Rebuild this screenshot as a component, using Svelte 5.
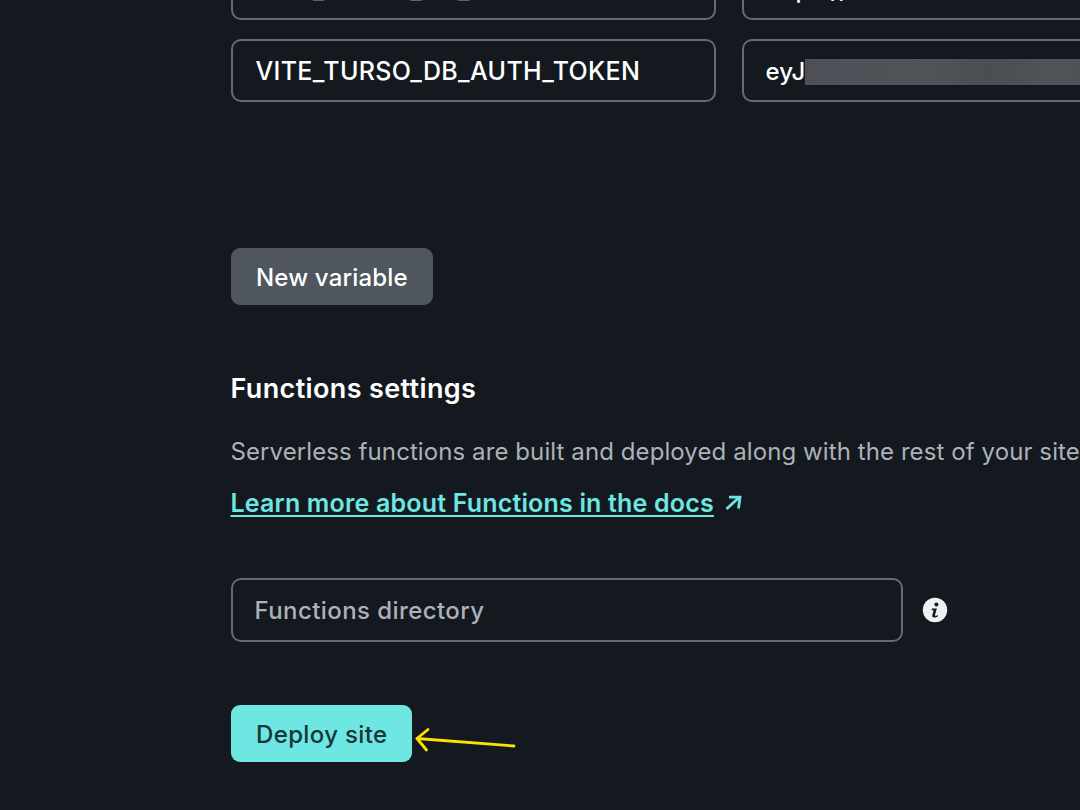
<script>
  const rows = [
    { name: 'VITE_TURSO_DB_URL', prefix: 'https://' },
    { name: 'VITE_TURSO_DB_AUTH_TOKEN', prefix: 'eyJ' }
  ];
</script>

<main class="page">
  <div class="vars">
    {#each rows as row}
      <div class="field name">{row.name}</div>
      <div class="field value">
        <span>{row.prefix}</span>
        <span class="blur"></span>
      </div>
    {/each}
  </div>

  <button class="btn secondary">New variable</button>

  <h2>Functions settings</h2>
  <p class="desc">Serverless functions are built and deployed along with the rest of your site.</p>
  <p class="learn">
    <a href="#docs">Learn more about Functions in the docs</a>
    <svg class="ext" width="17" height="15" viewBox="0 0 17 15" fill="none" stroke="#6ee6e1" stroke-width="2.8">
      <path d="M1.5 14 L13.5 3" />
      <path d="M4 2.2 H15 L13.5 13.5" />
    </svg>
  </p>

  <div class="dir-row">
    <div class="field dir">Functions directory</div>
    <svg class="info" width="26" height="26" viewBox="0 0 26 26">
      <circle cx="13" cy="13" r="12.2" fill="#eef0f2" />
      <circle cx="14.4" cy="7.6" r="2" fill="#151a21" />
      <path d="M9.8 11.6 H14.9 L12.9 18.2 C12.7 19 13.4 19.2 15.6 18 L15.7 19.4 C13.7 20.8 9.8 21.4 10.2 18.6 L11.6 13.2 H9.8 Z" fill="#151a21" />
    </svg>
  </div>

  <div class="deploy">
    <button class="btn primary">Deploy site</button>
    <svg class="callout" width="110" height="30" viewBox="0 0 110 30" fill="none" stroke="#ffe100" stroke-width="2.8" stroke-linecap="round" stroke-linejoin="round">
      <path d="M3 13.5 L100 21" />
      <path d="M14 4.5 L3 13.5 L12.5 25" />
    </svg>
  </div>
</main>

<style>
  :global(body) {
    margin: 0;
    background: #141920;
    overflow: hidden;
  }
  .page {
    box-sizing: border-box;
    height: 810px;
    overflow: hidden;
    padding-left: 230.5px;
    font-family: Inter, "Liberation Sans", sans-serif;
    font-size: 24px;
    color: #fff;
  }
  .vars {
    display: grid;
    grid-template-columns: 485.5px 500px;
    column-gap: 25.5px;
    row-gap: 19px;
    margin-top: -43px;
  }
  .field {
    box-sizing: border-box;
    height: 63px;
    border: 2px solid #666a72;
    border-radius: 10px;
    padding: 0 24px;
    display: flex;
    align-items: center;
    font-weight: 500;
    white-space: nowrap;
  }
  .name {
    font-size: 25px;
    letter-spacing: 0.33px;
    padding-left: 23px;
  }
  .value {
    overflow: hidden;
    padding-left: 22px;
    padding-top: 2px;
  }
  .blur {
    align-self: center;
    flex: 1;
    height: 26px;
    margin-top: 1px;
    background: linear-gradient(90deg, #4d5157, #505459 30%, #4a4e53 45%, #505459 60%, #4b4f55 80%, #4f5358);
  }
  .vars > .value:nth-child(2) .blur {
    height: 20px;
  }
  .btn {
    display: block;
    height: 57px;
    border: 0;
    border-radius: 9px;
    padding: 2px 25.5px 0;
    font: inherit;
    font-weight: 500;
  }
  .secondary {
    margin-top: 146px;
    background: #4f565d;
    color: #fff;
    letter-spacing: 0.17px;
  }
  h2 {
    margin: 68px 0 0;
    font-size: 27px;
    line-height: 32px;
    font-weight: 600;
    letter-spacing: 0.36px;
  }
  .desc {
    margin: 31px 0 0;
    line-height: 32px;
    color: #adb1b8;
    white-space: nowrap;
    letter-spacing: 0.09px;
  }
  .learn {
    margin: 19px 0 0;
    line-height: 32px;
    display: flex;
    align-items: center;
    gap: 11px;
  }
  .learn a {
    color: #6ee6e1;
    font-size: 25px;
    font-weight: 600;
    letter-spacing: 0.18px;
    text-decoration: underline;
    text-underline-offset: 3px;
    text-decoration-thickness: 2px;
  }
  .ext {
    margin-top: -1px;
  }
  .dir-row {
    display: flex;
    align-items: center;
    gap: 19px;
    margin-top: 59px;
  }
  .dir {
    width: 672.5px;
    height: 64px;
    color: #adb1b8;
    letter-spacing: 0.42px;
    padding-left: 22px;
  }
  .deploy {
    position: relative;
    margin-top: 63px;
    width: max-content;
  }
  .primary {
    background: #6ee6e1;
    color: #17353a;
    letter-spacing: 0.36px;
    padding-right: 24.5px;
  }
  .callout {
    position: absolute;
    left: 183.5px;
    top: 19.5px;
  }
</style>
